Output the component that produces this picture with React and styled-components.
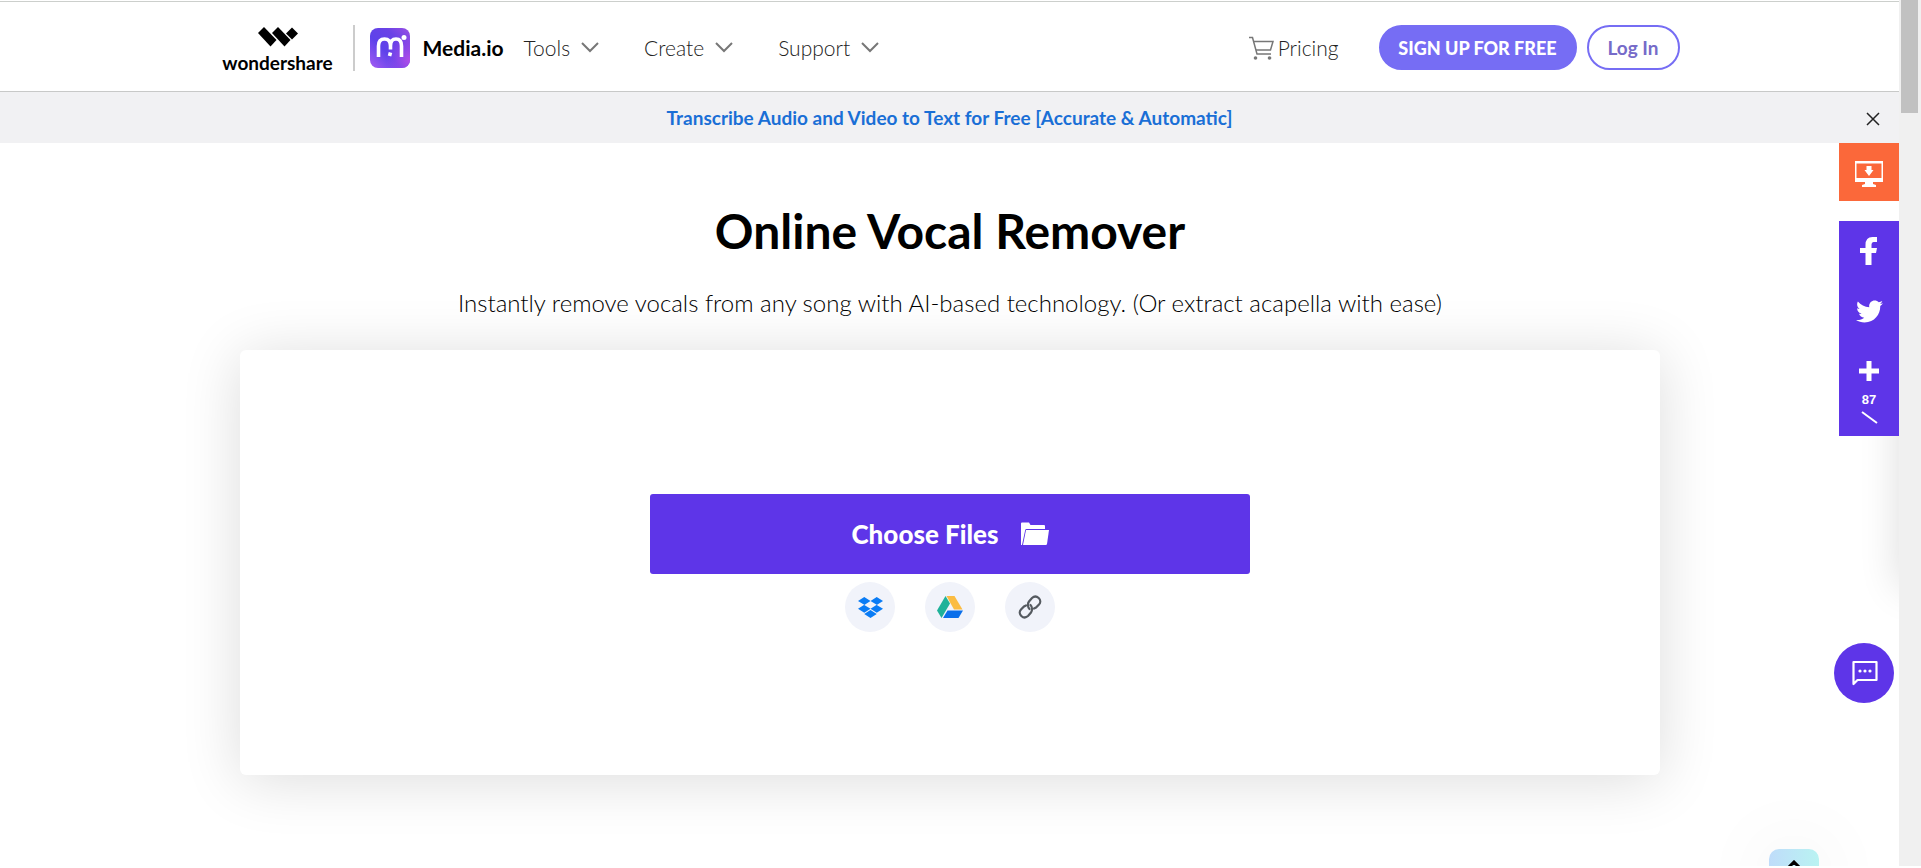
import React from "react";
import styled, { createGlobalStyle } from "styled-components";
import { FaTwitter, FaDropbox } from "react-icons/fa";

const GlobalStyle = createGlobalStyle`
  * {
    box-sizing: border-box;
  }

  body {
    margin: 0;
    background-color: white;
    font-family: "Lato", "Open Sans", sans-serif;
    color: black;
    overflow: hidden;
  }

  button {
    font-family: inherit;
    border: none;
    padding: 0;
    cursor: pointer;
  }

  a {
    text-decoration: none;
    color: inherit;
  }

  svg {
    display: block;
    flex-shrink: 0;
  }
`;

const Window = styled.div`
  display: grid;
  grid-template-columns: minmax(0, 1fr) 22px;
  height: 100vh;
  padding-bottom: 2px;
`;

const Page = styled.div`
  position: relative;
  overflow: hidden;
`;

const ScrollTrack = styled.div`
  background-color: #f0f0f0;
  padding: 0 3px 0 2px;
`;

const ScrollThumb = styled.div`
  height: 113px;
  background-color: #c1c1c1;
`;

const Header = styled.header`
  margin-top: 1px;
  height: 91px;
  border-top: 1px solid #cccfcc;
  border-bottom: 1px solid #c8c9c8;
`;

const HeaderInner = styled.div`
  display: flex;
  align-items: center;
  justify-content: space-between;
  max-width: 1460px;
  height: 100%;
  margin: 0 auto;
  padding: 2px 0 0 2px;
`;

const HeaderGroup = styled.div`
  display: flex;
  align-items: center;
`;

const Brand = styled.a`
  display: flex;
  flex-direction: column;
  align-items: center;
  gap: 4px;
  width: 112px;
  padding-top: 6px;
  font-size: 19px;
  line-height: 24px;
  font-weight: 700;
`;

const Divider = styled.div`
  width: 2px;
  height: 46px;
  margin: 0 15px 0 19px;
  background-color: #cccccc;
`;

const Product = styled.a`
  display: flex;
  align-items: center;
  gap: 13px;
  font-size: 21px;
  line-height: 28px;
  font-weight: 700;
`;

const Nav = styled.nav`
  display: flex;
  align-items: center;
  gap: 45px;
  margin-left: 20px;
`;

const NavButton = styled.button`
  display: flex;
  align-items: center;
  gap: 11px;
  background: none;
  color: #222222;
  font-size: 21px;
  line-height: 28px;
  font-weight: 300;
`;

const PricingLink = styled.a`
  display: flex;
  align-items: center;
  gap: 4px;
  margin-right: 40px;
  color: #222222;
  font-size: 21px;
  line-height: 28px;
  font-weight: 300;
`;

const PillButton = styled.button`
  height: 45px;
  width: ${({ $width }) => $width};
  margin-left: ${({ $outlined }) => ($outlined ? "10px" : "0")};
  border-radius: 23px;
  border: 2px solid #766df4;
  background-color: ${({ $outlined }) => ($outlined ? "white" : "#766df4")};
  color: ${({ $outlined }) => ($outlined ? "#766bc9" : "white")};
  font-size: ${({ $outlined }) => ($outlined ? "19px" : "18px")};
  font-weight: ${({ $outlined }) => ($outlined ? 700 : 900)};
`;

const Banner = styled.div`
  display: flex;
  align-items: center;
  justify-content: center;
  position: relative;
  height: 51px;
  background-color: #f1f1f3;
`;

const BannerLink = styled.a`
  color: #1a6fd6;
  font-size: 19px;
  line-height: 24px;
  font-weight: 700;
`;

const CloseButton = styled.button`
  position: absolute;
  right: 19px;
  top: 20px;
  background: none;
`;

const Hero = styled.main`
  display: flex;
  flex-direction: column;
  align-items: center;
  padding: 56px 239px 0 240px;
`;

const Title = styled.h1`
  margin: 0;
  font-size: 48px;
  line-height: 64px;
  font-weight: 700;
`;

const Subtitle = styled.p`
  margin: 24px 0 31px;
  font-size: 24px;
  line-height: 32px;
  font-weight: 300;
  color: black;
`;

const UploadCard = styled.section`
  display: flex;
  flex-direction: column;
  align-items: center;
  gap: 8px;
  width: 100%;
  padding: 144px 20px 143px;
  border-radius: 6px;
  background-color: white;
  box-shadow: 0 5px 60px rgba(0, 0, 0, 0.14);
`;

const ChooseButton = styled.button`
  display: flex;
  align-items: center;
  justify-content: center;
  gap: 22px;
  width: 100%;
  max-width: 600px;
  height: 80px;
  border-radius: 3px;
  background-color: #5e35e8;
  color: white;
  font-size: 26px;
  font-weight: 900;
`;

const SourceList = styled.div`
  display: flex;
  gap: 30px;
`;

const SourceButton = styled.button`
  display: flex;
  align-items: center;
  justify-content: center;
  width: 50px;
  height: 50px;
  border-radius: 50%;
  background-color: #f1f3fa;
  color: #0a7cf5;
`;

const SideBar = styled.aside`
  position: absolute;
  top: 143px;
  right: 0;
  width: 60px;
  color: white;
`;

const DesktopButton = styled.button`
  display: flex;
  align-items: center;
  justify-content: center;
  width: 100%;
  height: 58px;
  margin-bottom: 20px;
  padding-top: 4px;
  background-color: #fb683a;
`;

const ShareList = styled.div`
  display: flex;
  flex-direction: column;
  align-items: center;
  height: 215px;
  background-color: #5e35e8;
`;

const ShareButton = styled.button`
  display: flex;
  align-items: center;
  justify-content: center;
  width: 100%;
  height: 60px;
  background: none;
  color: white;
`;

const MoreButton = styled.button`
  display: flex;
  flex-direction: column;
  align-items: center;
  width: 100%;
  padding-top: 20px;
  background: none;
  color: white;
`;

const ShareCount = styled.span`
  margin: 11px 0 3px;
  font-family: "Liberation Sans", Arial, sans-serif;
  font-size: 13px;
  line-height: 16px;
  font-weight: 700;
`;

const EdgeShadow = styled.div`
  position: absolute;
  top: 300px;
  right: -60px;
  width: 60px;
  height: 288px;
  box-shadow: 0 0 40px rgba(0, 0, 0, 0.14);
`;

const ChatButton = styled.button`
  position: absolute;
  top: 643px;
  right: 5px;
  display: flex;
  align-items: center;
  justify-content: center;
  width: 60px;
  height: 60px;
  padding-left: 2px;
  border-radius: 50%;
  background-color: #5e35e8;
`;

const TopButton = styled.button`
  position: absolute;
  top: 849px;
  right: 80px;
  display: flex;
  justify-content: center;
  width: 50px;
  height: 50px;
  padding-top: 11px;
  border-radius: 10px;
  background: linear-gradient(90deg, #bfdcfa, #b9f3f2);
  box-shadow: 0 0 80px rgba(0, 0, 0, 0.08);
`;

const WondershareMark = () => (
  <svg width="40" height="20" viewBox="0 0 40 20">
    <path d="M0 6 6 0 18.500 13 12.500 19.500Z" />
    <path d="M14 6 20 0 32.500 13 26.500 19.500Z" />
    <path d="M28 6.500 34 .5 40 6.500 34 12.500Z" />
  </svg>
);

const MediaMark = () => (
  <svg width="40" height="40" viewBox="0 0 40 40">
    <defs>
      <linearGradient id="base" x1="0" y1="1" x2="1" y2="0">
        <stop offset="0" stopColor="#a65cf2" />
        <stop offset="0.400" stopColor="#5d42ea" />
        <stop offset="0.700" stopColor="#6a42e6" />
        <stop offset="1" stopColor="#9b4fe4" />
      </linearGradient>
      <radialGradient id="glow" cx="1" cy="0.800" r="0.600">
        <stop offset="0" stopColor="#b04ce8" />
        <stop offset="1" stopColor="#b04ce8" stopOpacity="0" />
      </radialGradient>
    </defs>
    <rect width="40" height="40" rx="8" fill="url(#base)" />
    <rect width="40" height="40" rx="8" fill="url(#glow)" />
    <path
      d="M8.500 29V18Q8.500 11 14.500 11T20.500 18V21.500M20.500 24.500 19.500 28M20.500 18Q20.500 11 26 11T31.500 18V29"
      fill="none"
      stroke="white"
      strokeWidth="3.600"
    />
    <circle cx="34" cy="9.500" r="2.500" fill="white" />
  </svg>
);

const Chevron = () => (
  <svg width="18" height="12" viewBox="0 0 18 12">
    <path d="M1 1 9 9 17 1" fill="none" stroke="#777" strokeWidth="2" />
  </svg>
);

const CartIcon = () => (
  <svg width="25" height="24" viewBox="0 0 25 24">
    <g fill="none" stroke="#777" strokeWidth="1.500">
      <path d="M0 1.500H3.500L8 18H22" />
      <path d="M4.500 5.500H24L21.500 14H7" />
    </g>
    <circle cx="6.500" cy="22" r="1.800" fill="#777" />
    <circle cx="20.500" cy="22" r="1.800" fill="#777" />
  </svg>
);

const CloseIcon = () => (
  <svg width="14" height="14" viewBox="0 0 14 14">
    <path d="M1 1 13 13M13 1 1 13" stroke="#222" strokeWidth="1.500" />
  </svg>
);

const FolderIcon = () => (
  <svg width="28" height="24" viewBox="0 0 28 24" fill="white">
    <path d="M0 23V1.500Q0 .5 1 .5H8L9.500 3H23Q24 3 24 4V7H5.500Q4.500 7 4.200 8L1 23Z" />
    <path d="M5 8H28L26 22Q25.800 23 24.800 23H2Z" />
  </svg>
);

const DriveIcon = () => (
  <svg width="26" height="22" viewBox="0 0 26 22">
    <path d="M8.500 0 13 7.500 4.500 22 0 14.500Z" fill="#1fb299" />
    <path d="M9.500 0H17.500L25.500 13.500H17Z" fill="#fbbc42" />
    <path d="M10.500 14.500H26L21.500 22H6Z" fill="#0b6fea" />
  </svg>
);

const LinkIcon = () => (
  <svg width="24" height="24" viewBox="0 0 24 24">
    <g fill="none" stroke="#555a60" strokeWidth="2.200" strokeLinecap="round">
      <path d="M11.500 14C9.500 12 9.500 8.500 11 6.500L14 3C18.500 -1 25 5 21 9.500L18 12.500L16 13.500" />
      <path d="M12.500 10C14.500 12 14.500 15.500 13 17.500L10 21C5.500 25 -1 19 3 14.500L6 11.500L8 10.500" />
    </g>
  </svg>
);

const DesktopIcon = () => (
  <svg width="28" height="26" viewBox="0 0 28 26" fill="white">
    <path
      fillRule="evenodd"
      d="M0 0H28V21H18V23L21 24V26H7V24L10 23V21H0ZM1.500 2.500V17H26.500V2.500Z"
    />
    <path d="M11.500 5H16.500V9H18.500L14 15 9.500 9H11.500Z" />
  </svg>
);

const FacebookIcon = () => (
  <svg width="18" height="28" viewBox="0 0 18 28">
    <path
      d="M5.500 28V16H0V11H5.500V8Q5.500 0 12.500 0H17V5H13.500Q11.500 5 11.500 7.500V11H17L16 16H11.500V28Z"
      fill="white"
    />
  </svg>
);

const PlusIcon = () => (
  <svg width="20" height="20" viewBox="0 0 20 20">
    <path d="M7.500 0H12.500V7.500H20V12.500H12.500V20H7.500V12.500H0V7.500H7.500Z" fill="white" />
  </svg>
);

const SlashIcon = () => (
  <svg width="17" height="13" viewBox="0 0 17 13">
    <path d="M1 1 16 12" stroke="white" strokeWidth="2" />
  </svg>
);

const ChatIcon = () => (
  <svg width="26" height="26" viewBox="0 0 26 26">
    <path
      d="M1.500 24V2H24.500V20H5.500Z"
      fill="none"
      stroke="white"
      strokeWidth="2.200"
      strokeLinejoin="round"
    />
    <g fill="white">
      <circle cx="8" cy="11" r="1.600" />
      <circle cx="13" cy="11" r="1.600" />
      <circle cx="18" cy="11" r="1.600" />
    </g>
  </svg>
);

const ArrowUpIcon = () => (
  <svg width="14" height="24" viewBox="0 0 14 24">
    <path d="M1 8 7 2 13 8M7 6V22" fill="none" stroke="black" strokeWidth="3" />
  </svg>
);

const menus = ["Tools", "Create", "Support"];

export default function App() {
  return (
    <>
      <GlobalStyle />
      <Window>
        <Page>
          <Header>
            <HeaderInner>
              <HeaderGroup>
                <Brand href="#">
                  <WondershareMark />
                  wondershare
                </Brand>
                <Divider />
                <Product href="#">
                  <MediaMark />
                  Media.io
                </Product>
                <Nav>
                  {menus.map(menu => (
                    <NavButton key={menu}>
                      {menu}
                      <Chevron />
                    </NavButton>
                  ))}
                </Nav>
              </HeaderGroup>
              <HeaderGroup>
                <PricingLink href="#">
                  <CartIcon />
                  Pricing
                </PricingLink>
                <PillButton $width="198px">SIGN UP FOR FREE</PillButton>
                <PillButton $width="93px" $outlined>
                  Log In
                </PillButton>
              </HeaderGroup>
            </HeaderInner>
          </Header>
          <Banner>
            <BannerLink href="#">
              Transcribe Audio and Video to Text for Free [Accurate &
              Automatic]
            </BannerLink>
            <CloseButton aria-label="Close">
              <CloseIcon />
            </CloseButton>
          </Banner>
          <Hero>
            <Title>Online Vocal Remover</Title>
            <Subtitle>
              Instantly remove vocals from any song with AI-based technology.
              (Or extract acapella with ease)
            </Subtitle>
            <UploadCard>
              <ChooseButton>
                Choose Files
                <FolderIcon />
              </ChooseButton>
              <SourceList>
                <SourceButton aria-label="Dropbox">
                  <FaDropbox size={25} />
                </SourceButton>
                <SourceButton aria-label="Google Drive">
                  <DriveIcon />
                </SourceButton>
                <SourceButton aria-label="Link">
                  <LinkIcon />
                </SourceButton>
              </SourceList>
            </UploadCard>
          </Hero>
          <EdgeShadow />
          <SideBar>
            <DesktopButton aria-label="Desktop version">
              <DesktopIcon />
            </DesktopButton>
            <ShareList>
              <ShareButton aria-label="Facebook">
                <FacebookIcon />
              </ShareButton>
              <ShareButton aria-label="Twitter">
                <FaTwitter size={27} />
              </ShareButton>
              <MoreButton>
                <PlusIcon />
                <ShareCount>87</ShareCount>
                <SlashIcon />
              </MoreButton>
            </ShareList>
          </SideBar>
          <ChatButton aria-label="Chat">
            <ChatIcon />
          </ChatButton>
          <TopButton aria-label="Back to top">
            <ArrowUpIcon />
          </TopButton>
        </Page>
        <ScrollTrack>
          <ScrollThumb />
        </ScrollTrack>
      </Window>
    </>
  );
}
